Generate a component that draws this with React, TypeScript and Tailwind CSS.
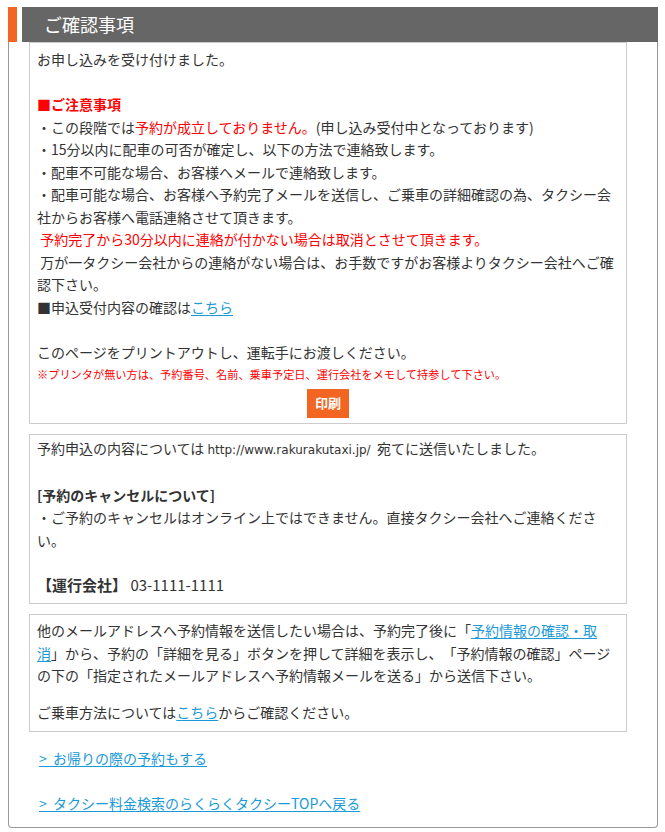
import React from 'react';

const font = { fontFamily: '"Noto Sans CJK JP", "Noto Sans", sans-serif' };

const Panel: React.FC<{ className?: string; children: React.ReactNode }> = ({ className = '', children }) => (
  <div className={`border border-[#cccccc] bg-white px-[7px] ${className}`}>{children}</div>
);

const Red: React.FC<{ children: React.ReactNode }> = ({ children }) => (
  <span className="text-[#ff0000]">{children}</span>
);

const TextLink: React.FC<{ children: React.ReactNode }> = ({ children }) => (
  <a href="#" className="text-[#1a9ad6] underline underline-offset-2">{children}</a>
);

export default function App() {
  return (
    <div
      className="min-h-[832px] bg-white pt-[7px] pl-[8px] text-[14px] leading-[22.5px] text-[#333333] [text-spacing-trim:space-all]"
      style={font}
    >
      <div className="w-[650px]">
        {/* header */}
        <div className="flex h-[35px]">
          <div className="w-[9px] bg-[#f26522]" />
          <div className="ml-[5px] flex flex-1 items-center bg-[#666666] pl-[22px] text-[18px] text-white">
            ご確認事項
          </div>
        </div>

        {/* body */}
        <div className="rounded-b-[4px] border-x border-b border-[#999999] pb-[12px] pl-[20px] pr-[30px]">
          <Panel className="pt-[5px] pb-[5px]">
            <p>お申し込みを受け付けました。</p>
            <p>&nbsp;</p>
            <p className="font-bold text-[#ff0000]">■ご注意事項</p>
            <p>・この段階では<Red>予約が成立しておりません。</Red>(申し込み受付中となっております)</p>
            <p>・15分以内に配車の可否が確定し、以下の方法で連絡致します。</p>
            <p>・配車不可能な場合、お客様へメールで連絡致します。</p>
            <p>・配車可能な場合、お客様へ予約完了メールを送信し、ご乗車の詳細確認の為、タクシー会社からお客様へ電話連絡させて頂きます。</p>
            <p className="text-[#ff0000]">&nbsp;予約完了から30分以内に連絡が付かない場合は取消とさせて頂きます。</p>
            <p>&nbsp;万が一タクシー会社からの連絡がない場合は、お手数ですがお客様よりタクシー会社へご確認下さい。</p>
            <p>■申込受付内容の確認は<TextLink>こちら</TextLink></p>
            <p>&nbsp;</p>
            <p>このページをプリントアウトし、運転手にお渡しください。</p>
            <p className="text-[11.2px] text-[#ff0000]">※プリンタが無い方は、予約番号、名前、乗車予定日、運行会社をメモして持参して下さい。</p>
            <div className="mt-[3px] flex justify-center">
              <button className="h-[29px] w-[42px] bg-[#f26522] text-[13px] font-bold text-white">印刷</button>
            </div>
          </Panel>

          <Panel className="mt-[10px] pt-[2px] pb-[7px]">
            <p>
              予約申込の内容については{' '}
              <span className="text-[12px]" style={{ fontFamily: '"DejaVu Sans", sans-serif' }}>http://www.rakurakutaxi.jp/</span>
              {'\u00a0 '}宛てに送信いたしました。
            </p>
            <p>&nbsp;</p>
            <p className="font-bold">[予約のキャンセルについて]</p>
            <p>・ご予約のキャンセルはオンライン上ではできません。直接タクシー会社へご連絡ください。</p>
            <p>&nbsp;</p>
            <p className="text-[15px]"><span className="font-bold">【運行会社】</span> 03-1111-1111</p>
          </Panel>

          <Panel className="mt-[10px] pt-[4px] pb-[8px]">
            <p>
              他のメールアドレスへ予約情報を送信したい場合は、予約完了後に「<TextLink>予約情報の確認・取消</TextLink>」から、予約の「詳細を見る」ボタンを押して詳細を表示し、「予約情報の確認」ページの下の「指定されたメールアドレスへ予約情報メールを送る」から送信下さい。
            </p>
            <p className="mt-[14px]">ご乗車方法については<TextLink>こちら</TextLink>からご確認ください。</p>
          </Panel>

          <div className="mt-[15px] pl-[10px]">
            <p><TextLink>&gt;&nbsp;&nbsp;お帰りの際の予約もする</TextLink></p>
            <p>&nbsp;</p>
            <p><TextLink>&gt;&nbsp;&nbsp;タクシー料金検索のらくらくタクシーTOPへ戻る</TextLink></p>
          </div>
        </div>
      </div>
    </div>
  );
}
